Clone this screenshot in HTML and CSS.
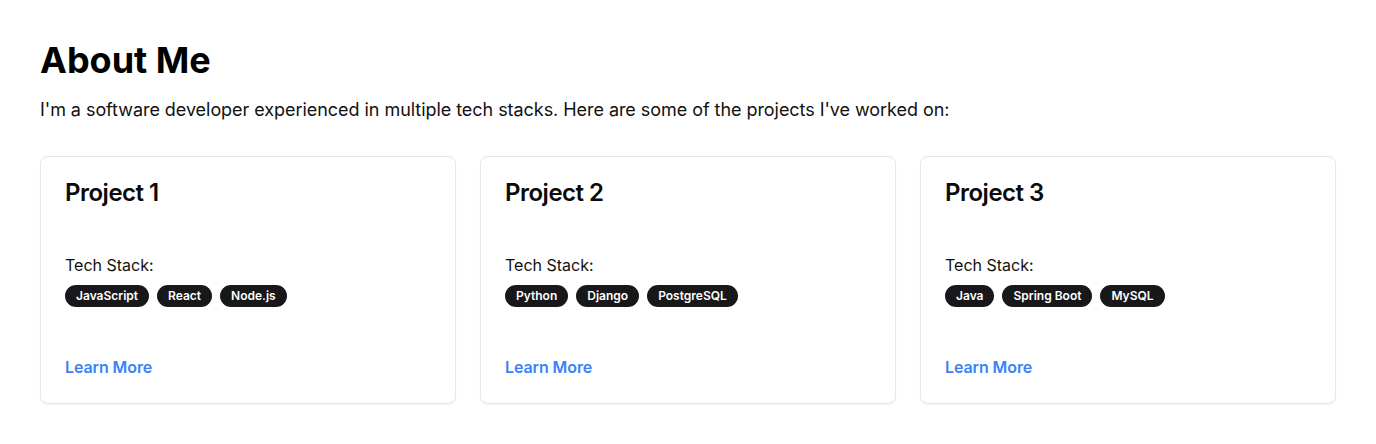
FILE: index.html
```html
<!DOCTYPE html>
<html lang="en">
<head>
<meta charset="utf-8">
<title>About Me</title>
<link rel="stylesheet" href="styles.css">
</head>
<body>
<main class="page">
  <h1 class="title">About Me</h1>
  <p class="intro">I'm a software developer experienced in multiple tech stacks. Here are some of the projects I've worked on:</p>
  <div class="grid">
    <div class="card">
      <h2 class="card-title">Project 1</h2>
      <div class="card-content">
        <p class="label">Tech Stack:</p>
        <div class="badges">
          <span class="badge">JavaScript</span>
          <span class="badge">React</span>
          <span class="badge">Node.js</span>
        </div>
      </div>
      <a class="link" href="#">Learn More</a>
    </div>
    <div class="card">
      <h2 class="card-title">Project 2</h2>
      <div class="card-content">
        <p class="label">Tech Stack:</p>
        <div class="badges">
          <span class="badge">Python</span>
          <span class="badge">Django</span>
          <span class="badge">PostgreSQL</span>
        </div>
      </div>
      <a class="link" href="#">Learn More</a>
    </div>
    <div class="card">
      <h2 class="card-title">Project 3</h2>
      <div class="card-content">
        <p class="label">Tech Stack:</p>
        <div class="badges">
          <span class="badge">Java</span>
          <span class="badge">Spring Boot</span>
          <span class="badge">MySQL</span>
        </div>
      </div>
      <a class="link" href="#">Learn More</a>
    </div>
  </div>
</main>
</body>
</html>
```

FILE: styles.css
```css
* { box-sizing: border-box; }
html, body { margin: 0; padding: 0; background: #ffffff; }
body {
  font-family: Inter, "Noto Sans", "Liberation Sans", sans-serif;
  color: #0a0a0a;
}
.page { padding: 40px; }
.title {
  margin: 0 0 16px 0;
  font-size: 36px;
  line-height: 40px;
  font-weight: 700;
  color: #000;
}
.intro {
  margin: 0 0 32px 0;
  font-size: 18px;
  line-height: 28px;
  color: #111;
  letter-spacing: -0.05px;
}
.grid {
  display: grid;
  grid-template-columns: repeat(3, 1fr);
  gap: 24px;
}
.card {
  display: flex;
  flex-direction: column;
  border: 1px solid #e5e7eb;
  border-radius: 8px;
  background: #fff;
  box-shadow: 0 1px 2px rgba(0,0,0,0.05);
  padding: 24px;
  height: 248px;
}
.card-title {
  margin: 0;
  font-size: 24px;
  line-height: 24px;
  font-weight: 600;
  letter-spacing: -0.5px;
  color: #0a0a0a;
}
.card-content { margin-top: 48px; }
.label {
  margin: 0;
  font-size: 16px;
  line-height: 24px;
  color: #111;
}
.badges {
  margin-top: 8px;
  display: flex;
  gap: 8px;
  flex-wrap: wrap;
}
.badge {
  display: inline-flex;
  align-items: center;
  background: #18181b;
  color: #fff;
  border-radius: 999px;
  padding: 2px 10px;
  border: 1px solid transparent;
  font-size: 12px;
  line-height: 16px;
  font-weight: 600;
}
.link {
  margin-top: auto;
  font-size: 16px;
  line-height: 24px;
  font-weight: 600;
  color: #3b82f6;
  text-decoration: none;
  align-self: flex-start;
  letter-spacing: -0.1px;
}
```
